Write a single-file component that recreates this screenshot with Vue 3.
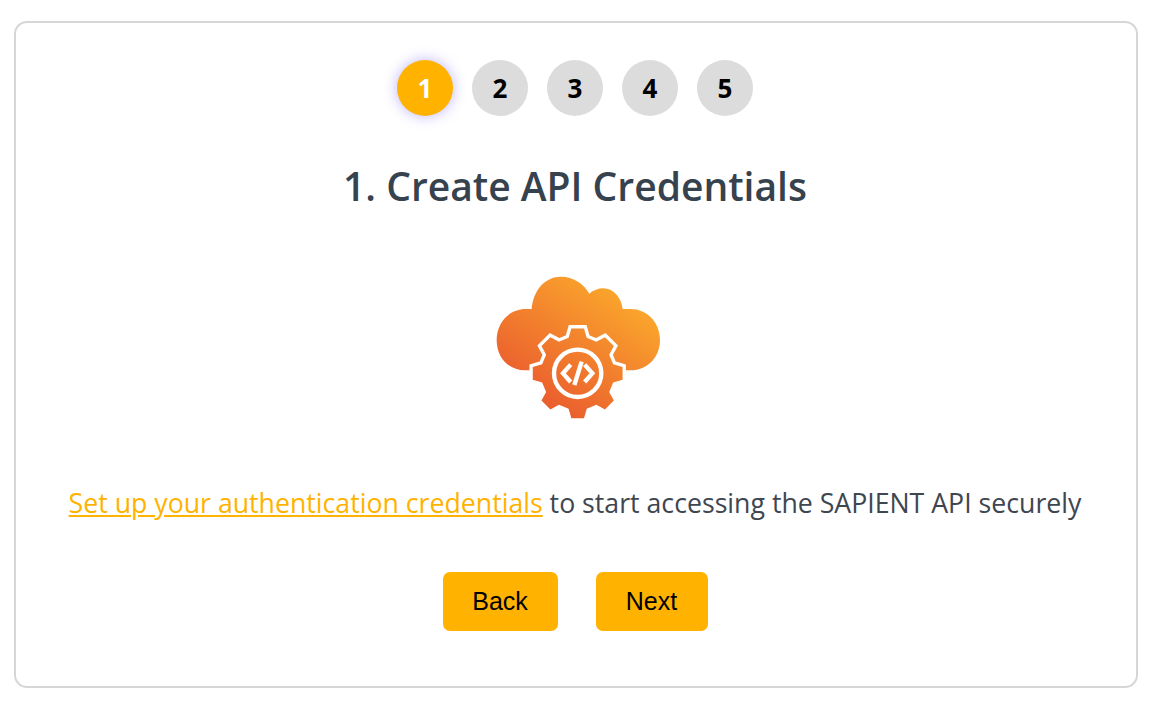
<template>
  <div class="page">
    <div class="card">
      <div class="steps">
        <div v-for="n in steps" :key="n" class="step" :class="{ active: n === current }">{{ n }}</div>
      </div>
      <h2 class="title">1. Create API Credentials</h2>
      <svg class="icon" viewBox="0 0 600 510" width="200" height="170">
        <defs>
          <linearGradient id="cloudGrad" gradientUnits="userSpaceOnUse" x1="450" y1="90" x2="190" y2="470">
            <stop offset="0" stop-color="#fbaa2c" />
            <stop offset="1" stop-color="#e9572e" />
          </linearGradient>
        </defs>
        <path
          fill="url(#cloudGrad)"
          d="M135 331 C85 331 50 292 50 240 C50 188 88 147 137 147 L155 147 C160 90 195 50 243 50 C280 50 310 70 328 101 C340 91 354 85 370 85 C400 85 424 112 428 147 L452 147 C502 147 540 188 540 240 C540 292 502 331 452 331 Z"
        />
        <path :d="gearPath" class="gear" fill="url(#cloudGrad)" />
        <circle cx="293" cy="340" r="71" fill="none" stroke="#fff" stroke-width="13" />
        <g fill="none" stroke="#fff" stroke-width="13">
          <path d="M272 314 L249 340 L272 366" />
          <path d="M314 314 L337 340 L314 366" />
          <path d="M305 305 L283 375" />
        </g>
      </svg>
      <p class="desc">
        <a href="#" class="link">Set up your authentication credentials</a> to start accessing the SAPIENT API securely
      </p>
      <div class="actions">
        <button class="btn back">Back</button>
        <button class="btn next">Next</button>
      </div>
    </div>
  </div>
</template>

<script setup>
const steps = [1, 2, 3, 4, 5];
const current = 1;

// gear outline: 8 teeth around the centre of the icon
const buildGear = () => {
  const cx = 293;
  const cy = 340;
  const outer = 136;
  const root = 110;
  const pts = [];
  for (let i = 0; i < 8; i++) {
    const a = (i * Math.PI) / 4 - Math.PI / 2;
    const tip = 0.14;
    const base = 0.25;
    [
      [root, a - base],
      [outer, a - tip],
      [outer, a + tip],
      [root, a + base],
    ].forEach(([r, t]) => {
      pts.push(`${(cx + r * Math.cos(t)).toFixed(1)} ${(cy + r * Math.sin(t)).toFixed(1)}`);
    });
  }
  return `M${pts.join(' L')} Z`;
};
const gearPath = buildGear();
</script>

<style>
html, body {
  background: #fff;
}
</style>

<style scoped>
.page {
  padding: 21px 13px 0 14px;
}

.card {
  height: 667px;
  box-sizing: border-box;
  border: 2px solid #d6d6d6;
  border-radius: 13px;
  padding: 37px 2px 0 0;
  display: flex;
  flex-direction: column;
  align-items: center;
  font-family: "Open Sans", sans-serif;
}

.steps {
  display: flex;
  gap: 19px;
}

.step {
  width: 56px;
  height: 56px;
  border-radius: 50%;
  background: #dcdcdc;
  color: #000;
  font-weight: 700;
  font-size: 26px;
  display: flex;
  align-items: center;
  justify-content: center;
}

.step.active {
  background: #ffb300;
  color: #fff;
  box-shadow: 0 0 14px rgba(90, 70, 240, 0.4);
}

.title {
  margin: 40px 0 0;
  font-size: 39px;
  line-height: 60px;
  font-weight: 600;
  color: #36424d;
}

.icon {
  display: block;
  margin: 44px 0 0 10px;
}

.gear {
  stroke: #fff;
  stroke-width: 20px;
  paint-order: stroke;
}

.desc {
  margin: 53px 0 0;
  font-size: 26.7px;
  line-height: 40px;
  color: #404650;
}

.link {
  color: #ffb300;
  text-decoration: underline;
}

.actions {
  display: flex;
  gap: 38px;
  margin-top: 49px;
}

.btn {
  height: 59px;
  border: none;
  border-radius: 7px;
  background: #ffb300;
  color: #000;
  font-family: "Liberation Sans", sans-serif;
  font-size: 25px;
}

.back {
  width: 115px;
}

.next {
  width: 112px;
}
</style>
